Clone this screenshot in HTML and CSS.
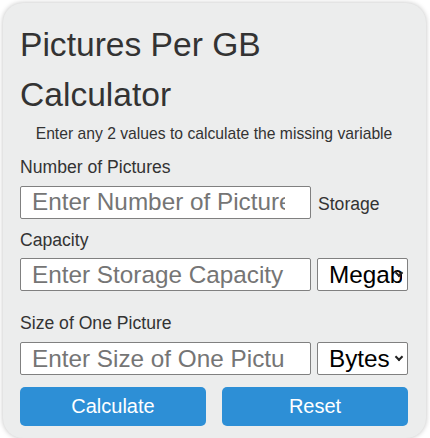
FILE: index.html
```html
<!DOCTYPE html>
<html lang="en">
<head>
    <meta charset="UTF-8">
    <meta name="viewport" content="width=device-width, initial-scale=1.0">
    <title>Pictures Per GB Calculator</title>
    <link rel="stylesheet" href="styles.css">
</head>
<body>

<div class="calculator">
    <h1 class="title">Pictures Per GB Calculator</h1>
    <p class="note">Enter any 2 values to calculate the missing variable</p>

    <form class="form" onsubmit="return false;">
        <!-- Number of pictures -->
        <label class="label label-block" for="pictures">Number of Pictures</label>
        <div class="flow"><input type="number" class="field" id="pictures" placeholder="Enter Number of Pictures"><label class="label label-inline" for="capacity">Storage Capacity</label></div>

        <!-- Storage capacity -->
        <div class="row">
            <input type="number" class="field" id="capacity" placeholder="Enter Storage Capacity">
            <span class="unit-wrap">
                <select class="unit" id="capacity-unit">
                    <option>Megabytes</option>
                    <option>Gigabytes</option>
                    <option>Terabytes</option>
                </select>
            </span>
        </div>

        <!-- Size of one picture -->
        <label class="label label-block label-gap" for="size">Size of One Picture</label>
        <div class="row">
            <input type="number" class="field" id="size" placeholder="Enter Size of One Picture">
            <span class="unit-wrap">
                <select class="unit" id="size-unit">
                    <option>Bytes</option>
                    <option>Kilobytes</option>
                    <option>Megabytes</option>
                </select>
            </span>
        </div>

        <div class="buttons">
            <button type="button" class="button">Calculate</button>
            <button type="reset" class="button">Reset</button>
        </div>
    </form>
</div>

</body>
</html>
```

FILE: styles.css
```css
body {
    font-family: 'Liberation Sans', Arial, sans-serif;
    margin: 0;
    padding: 3px 4px 0 3px;
    background-color: #fff;
    color: #333;
    overflow: hidden;
}
.calculator {
    background-color: #eceded;
    border-radius: 20px;
    box-shadow: 0 0 5px rgba(0, 0, 0, 0.25);
    padding: 17px 18px 13px 17px;
    height: 435px;
    box-sizing: border-box;
}
.title {
    font-size: 33.6px;
    font-weight: normal;
    line-height: 50.4px;
    margin: 0;
}
.note {
    font-size: 15.7px;
    text-align: center;
    margin: 4px 0 0;
}
.form {
    margin-top: 14px;
}
.label {
    font-size: 17.6px;
}
.label-block {
    display: block;
    margin-bottom: 8px;
}
.label-gap {
    margin-top: 22px;
}
.label-inline {
    margin-left: 7px;
}
.flow {
    font-size: 17.6px;
    line-height: 36px;
}
.field {
    font-family: inherit;
    font-size: 24.3px;
    width: 291px;
    height: 33px;
    box-sizing: border-box;
    padding: 0 25px 0 11px;
    border: 1px solid #808080;
    border-radius: 2px;
    background-color: #fff;
    margin: 0;
    vertical-align: baseline;
    -moz-appearance: textfield;
}
.field::-webkit-outer-spin-button,
.field::-webkit-inner-spin-button {
    -webkit-appearance: none;
    margin: 0;
}
.field::placeholder {
    color: #757575;
}
.row {
    display: flex;
    gap: 6px;
}
.unit-wrap {
    position: relative;
    display: block;
}
/* little chevron drawn over the select, like the browser arrow */
.unit-wrap::after {
    content: "";
    position: absolute;
    right: 6px;
    top: 12px;
    width: 4px;
    height: 4px;
    border-right: 2px solid #222;
    border-bottom: 2px solid #222;
    transform: rotate(45deg);
    pointer-events: none;
}
.unit {
    -webkit-appearance: none;
    appearance: none;
    font-family: inherit;
    font-size: 24.3px;
    width: 91px;
    height: 33px;
    box-sizing: border-box;
    padding: 0 5px 0 11px;
    border: 1px solid #808080;
    border-radius: 2px;
    background-color: #fff;
    color: #000;
    margin: 0;
    display: block;
}
.buttons {
    display: flex;
    gap: 16px;
    margin-top: 12px;
}
.button {
    flex: 1;
    height: 39px;
    background-color: #2d8fd6;
    border: none;
    border-radius: 5px;
    color: #fff;
    font-family: inherit;
    font-size: 20px;
    cursor: pointer;
}
.button:hover {
    background-color: #1f7cc0;
}
```
